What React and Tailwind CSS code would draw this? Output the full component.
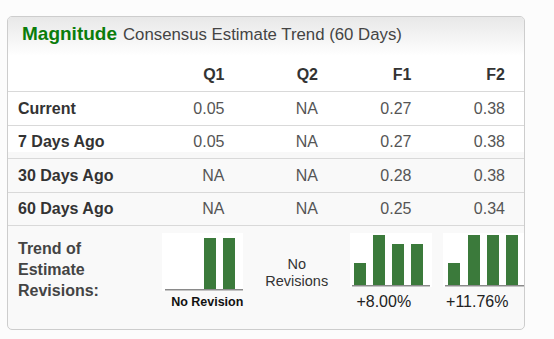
import React from "react";

const GREEN = "#3b7a3b";

function Chart({ width, height, bars, base, lineX, lineW, lineColor = "#8a8a8a" }) {
  return (
    <svg width={width} height={height} viewBox={`0 0 ${width} ${height}`} className="block">
      <rect x="0" y="0" width={width} height={height} fill="#ffffff" />
      {bars.map((b, i) => (
        <rect key={i} x={b.x} y={b.top} width={b.w || 12} height={base - b.top} fill={GREEN} />
      ))}
      <rect x={lineX} y={base} width={lineW} height="1.5" fill={lineColor} />
    </svg>
  );
}

const rows = [
  { label: "Current", vals: ["0.05", "NA", "0.27", "0.38"], h: "h-[34px]", bg: "bg-white" },
  { label: "7 Days Ago", vals: ["0.05", "NA", "0.27", "0.38"], h: "h-[33px]", bg: "bg-white shadow-[inset_0_-6px_0_#f8f8f8]" },
  { label: "30 Days Ago", vals: ["NA", "NA", "0.28", "0.38"], h: "h-[34px]", bg: "bg-[#f9f9f9]" },
  { label: "60 Days Ago", vals: ["NA", "NA", "0.25", "0.34"], h: "h-[33px]", bg: "bg-[#f9f9f9]" },
];

export default function App() {
  return (
    <div className="min-h-screen w-full bg-[#fcfcfc] pt-[16px] pl-[7px] font-['Liberation_Sans',Arial,sans-serif]">
      <div className="w-[518px] h-[314px] rounded-[5px] border border-[#cdcdcd] bg-[#f9f9f9] overflow-hidden">
        {/* title */}
        <div className="h-[39px] bg-gradient-to-b from-[#e8e8e8] to-white pl-[14px] pt-[6px] flex items-baseline">
          <span className="text-[19px] leading-[22px] font-bold text-[#0b7d0b]">Magnitude</span>
          <span className="ml-[6px] text-[16.8px] leading-[22px] text-[#444]">Consensus Estimate Trend (60 Days)</span>
        </div>

        {/* header row */}
        <div className="grid grid-cols-[142px_repeat(4,minmax(0,1fr))] h-[36px] border-b border-[#d9d9d9] bg-white items-center pt-[2px]">
          <div />
          {["Q1", "Q2", "F1", "F2"].map((h) => (
            <div key={h} className="text-right pr-[19px] text-[16px] font-bold text-[#333]">
              {h}
            </div>
          ))}
        </div>

        {rows.map((r) => (
          <div
            key={r.label}
            className={`grid grid-cols-[142px_repeat(4,minmax(0,1fr))] ${r.h} border-b border-[#d9d9d9] ${r.bg} items-center`}
          >
            <div className="pl-[10px] text-[16px] font-bold text-[#333] leading-[20px]">{r.label}</div>
            {r.vals.map((v, i) => (
              <div key={i} className="text-right pr-[19px] text-[16px] text-[#555] leading-[20px]">
                {v}
              </div>
            ))}
          </div>
        ))}

        {/* trend row */}
        <div className="grid grid-cols-[142px_repeat(4,minmax(0,1fr))]">
          <div className="pl-[10px] pt-[12px] text-[16px] font-bold text-[#444] leading-[21px]">
            Trend of
            <br />
            Estimate
            <br />
            Revisions:
          </div>

          <div className="flex flex-col pt-[7px]">
            <div className="ml-[12px]">
              <Chart
                width={81}
                height={58}
                base={56}
                lineX={3}
                lineW={78}
                bars={[
                  { x: 42, top: 5 },
                  { x: 61, top: 5 },
                ]}
              />
            </div>
            <div className="mt-[3px] pl-[21px] text-center text-[12.5px] font-bold leading-[16px] text-[#111]">
              No Revision
            </div>
          </div>

          <div className="pt-[30px] pl-[13px] text-center text-[14.5px] leading-[17px] text-[#333]">
            No
            <br />
            Revisions
          </div>

          <div className="flex flex-col pt-[7px]">
            <div className="ml-[13px]">
              <Chart
                width={82}
                height={54}
                base={52}
                lineX={2}
                lineW={78}
                bars={[
                  { x: 4, top: 30 },
                  { x: 23, top: 2 },
                  { x: 42, top: 11 },
                  { x: 61, top: 11 },
                ]}
              />
            </div>
            <div className="mt-[5px] text-center text-[16px] leading-[20px] text-[#222]">+8.00%</div>
          </div>

          <div className="flex flex-col pt-[7px]">
            <div className="ml-[12px]">
              <Chart
                width={81}
                height={54}
                base={52}
                lineX={2}
                lineW={79}
                bars={[
                  { x: 5, top: 30 },
                  { x: 25, top: 2 },
                  { x: 44, top: 2 },
                  { x: 63, top: 2 },
                ]}
              />
            </div>
            <div className="mt-[5px] text-center text-[16px] leading-[20px] text-[#222]">+11.76%</div>
          </div>
        </div>
      </div>
    </div>
  );
}
